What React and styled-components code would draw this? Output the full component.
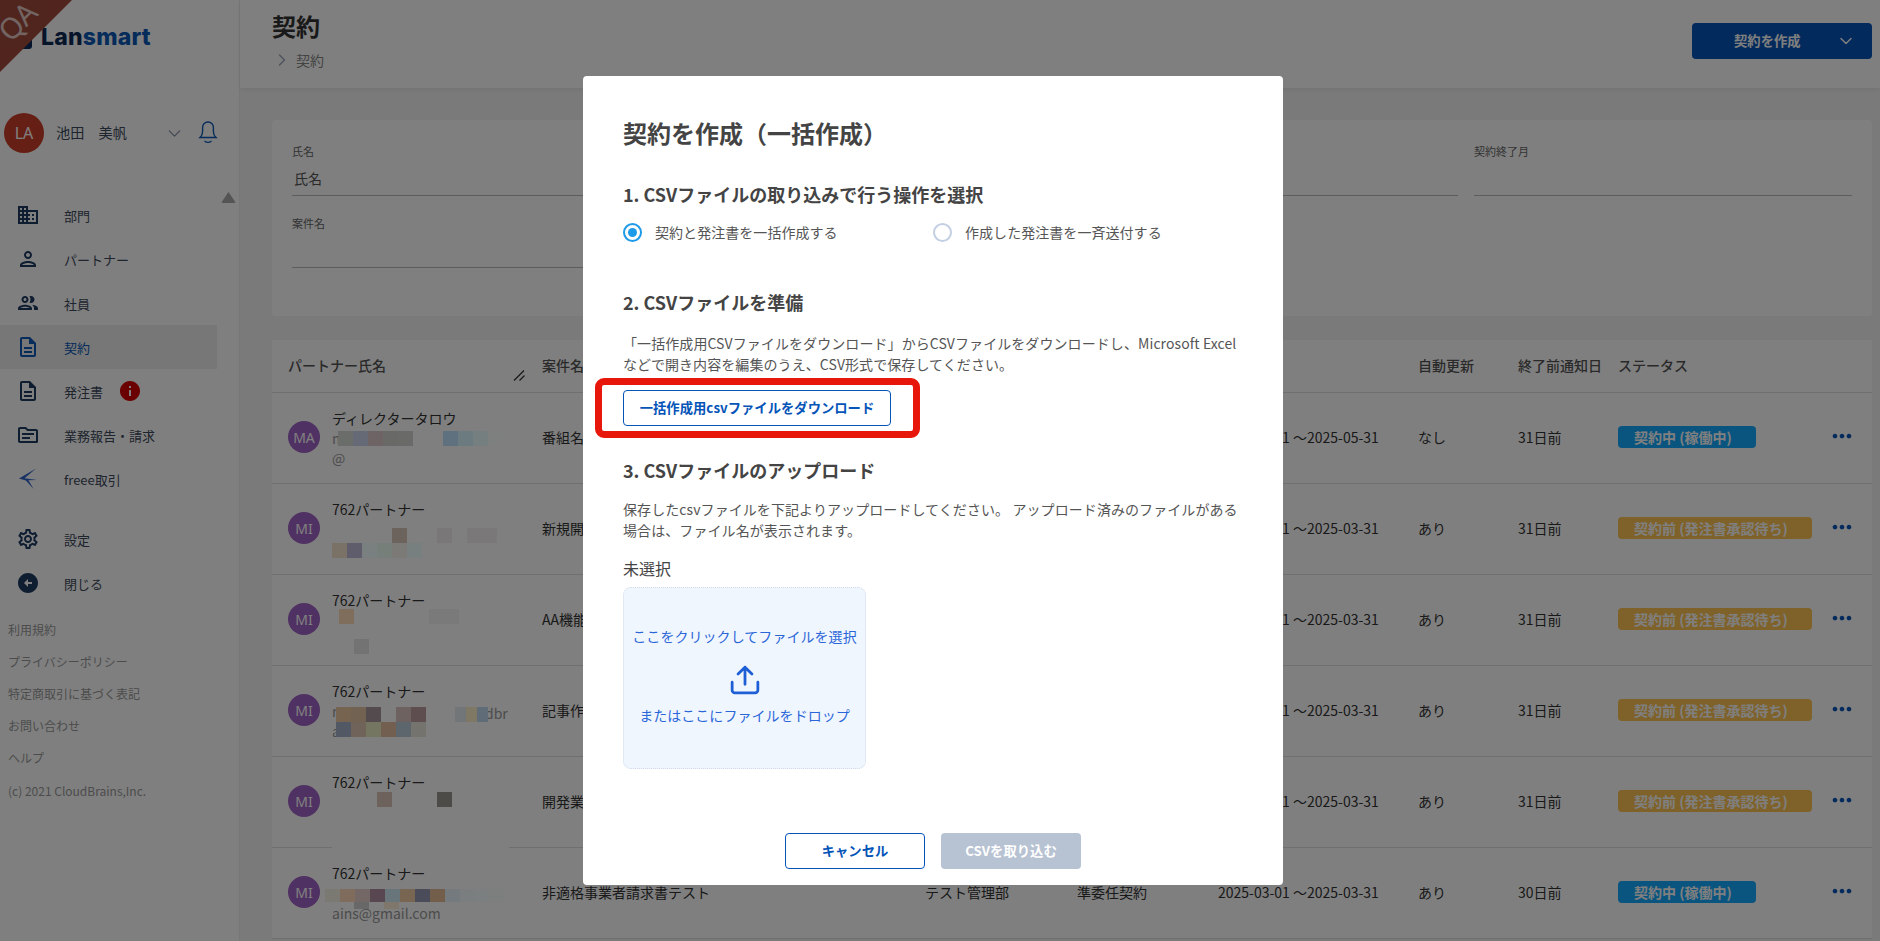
import React from 'react'
import styled, { createGlobalStyle } from 'styled-components'
import {
  MdBusiness,
  MdOutlinePerson,
  MdOutlinePeople,
  MdOutlineDescription,
  MdOutlineTopic,
  MdOutlineSettings,
  MdArrowCircleLeft,
  MdInfo,
  MdMoreHoriz
} from 'react-icons/md'
import { ChevronDown, ChevronRight } from 'lucide-react'

const GlobalStyle = createGlobalStyle`
  html, body {
    margin: 0;
    padding: 0;
    height: 941px;
    overflow: hidden;
    background: #fff;
    font-family: "Noto Sans CJK JP", "Noto Sans", sans-serif;
    color: #333;
  }
  * { box-sizing: border-box; }
`

const Page = styled.div`
  display: flex;
  width: 1880px;
  height: 941px;
  position: relative;
  overflow: hidden;
`

const Ribbon = styled.div`
  position: absolute;
  left: 0;
  top: 0;
  width: 72px;
  height: 72px;
  background: #a24a3c;
  clip-path: polygon(0 0, 100% 0, 0 100%);
  z-index: 3;
  span {
    position: absolute;
    left: -3px;
    top: 3px;
    font-size: 29px;
    line-height: 36px;
    color: #fff;
    opacity: 0.7;
    transform: rotate(-45deg);
    font-family: "Noto Sans", sans-serif;
  }
`

const Sidebar = styled.aside`
  width: 240px;
  flex: none;
  background: #fff;
  border-right: 1px solid #eee;
`

const LogoRow = styled.div`
  height: 113px;
  display: flex;
  align-items: flex-start;
  gap: 9px;
  padding: 25px 0 0 8px;
`

const LogoMark = styled.div`
  width: 24px;
  height: 24px;
  border-radius: 3px;
  background: #0a2b5c;
`

const LogoText = styled.div`
  font-family: "Inter", sans-serif;
  font-size: 23px;
  font-weight: 800;
  line-height: 24px;
  letter-spacing: 0.2px;
  color: #0e2a57;
  b {
    font-weight: 800;
    color: #0a59b4;
  }
`

const UserRow = styled.div`
  height: 40px;
  display: flex;
  align-items: center;
  padding-left: 4px;
`

const UserAvatar = styled.div`
  width: 40px;
  height: 40px;
  border-radius: 50%;
  background: #cb3520;
  color: #fff;
  display: flex;
  align-items: center;
  justify-content: center;
  font-family: "Noto Sans", sans-serif;
  font-size: 16px;
  opacity: 0.95;
`

const UserName = styled.div`
  width: 108px;
  margin: -2px 0 0 12px;
  font-size: 14.2px;
  color: #3d4a5c;
`

const Bell = styled.svg`
  width: 20px;
  height: 25px;
  margin: -4px 0 0 13px;
  fill: none;
  stroke: #0a59b4;
  stroke-width: 1.4;
`

const NavWrap = styled.nav`
  margin-top: 40px;
  position: relative;
`

const ScrollArrow = styled.div`
  position: absolute;
  left: 221px;
  top: -1px;
  width: 15px;
  height: 11px;
  background: #a8a8a8;
  border-radius: 2px;
  clip-path: polygon(50% 0, 100% 100%, 0 100%);
`

const NavItem = styled.div`
  width: 217px;
  height: 44px;
  display: flex;
  align-items: center;
  font-size: 13px;
  color: ${p => (p.$active ? '#0a59b4' : '#3d4a5c')};
  background: ${p => (p.$active ? '#eeeeee' : 'transparent')};
  margin-top: ${p => p.$top || 0}px;
  svg.nav-icon {
    flex: none;
    margin-left: 16px;
    margin-right: 24px;
    color: ${p => (p.$active ? '#0a59b4' : '#1f3b63')};
  }
`

const InfoBadge = styled.span`
  display: flex;
  margin-left: 15px;
  color: #d40000;
`

const FooterLinks = styled.div`
  margin-top: 9px;
  padding-left: 8px;
`

const FooterLink = styled.div`
  height: 32px;
  line-height: 32px;
  font-size: 12px;
  color: #999;
`

const Copyright = styled(FooterLink)`
  margin-top: 1px;
  color: #999;
`

const Main = styled.main`
  flex: 1;
  min-width: 0;
  background: #f5f5f5;
`

const Header = styled.header`
  height: 88px;
  background: #fff;
  box-shadow: 0 2px 6px rgba(0, 0, 0, 0.06);
  padding: 8px 8px 0 32px;
  display: flex;
  justify-content: space-between;
  position: relative;
`

const PageTitle = styled.h1`
  margin: 0;
  font-size: 24px;
  font-weight: 700;
  line-height: 36px;
  color: #333;
`

const Crumb = styled.div`
  display: flex;
  align-items: center;
  margin-top: 6px;
  font-size: 14px;
  color: #888;
  svg {
    color: #9fabbb;
    margin-right: 4px;
  }
`

const CreateButton = styled.div`
  width: 180px;
  height: 36px;
  margin-top: 15px;
  border-radius: 4px;
  background: #0554b8;
  color: #fff;
  font-size: 13.333px;
  font-weight: 700;
  position: relative;
  display: flex;
  align-items: center;
  padding: 0 0 2px 42px;
  svg {
    position: absolute;
    right: 16px;
    top: 8px;
  }
`

const Content = styled.div`
  padding: 32px 8px 0 32px;
`

const FilterCard = styled.section`
  height: 196px;
  background: #fff;
  border-radius: 4px;
  padding: 24px 20px 0;
  display: grid;
  grid-template-columns: repeat(4, 378px);
  grid-auto-rows: 72px;
  column-gap: 16px;
`

const Field = styled.div`
  height: 52px;
  border-bottom: 1px solid #bbb;
  font-size: 14px;
  color: #555;
  padding-left: 2px;
  label {
    display: block;
    margin: -1px 0 0 -2px;
    height: 25px;
    line-height: 16px;
    font-size: 11px;
    color: #666;
  }
`

const TableCard = styled.section`
  margin-top: 24px;
  background: #fff;
`

const Row = styled.div`
  display: grid;
  grid-template-columns: 254px 383px 152px 141px 200px 100px 100px 215px 1fr;
  align-items: center;
  height: ${p => p.$height}px;
  padding: 0 0 2px 16px;
  border-bottom: 1px solid #dedede;
  font-size: 14px;
  color: #333;
`

const HeadCell = styled.div`
  font-size: 14px;
  font-weight: 500;
  color: #555;
  position: relative;
  svg {
    position: absolute;
    left: 225px;
    top: 14px;
  }
`

const PartnerCell = styled.div`
  display: flex;
  align-items: center;
  position: relative;
  height: 88px;
`

const Avatar = styled.div`
  width: 32px;
  height: 32px;
  flex: none;
  border-radius: 50%;
  background: #9c5ac4;
  color: #fff;
  opacity: 0.95;
  display: flex;
  align-items: center;
  justify-content: center;
  font-family: "Noto Sans", sans-serif;
  font-size: 14px;
`

const PartnerText = styled.div`
  align-self: flex-start;
  margin-left: 12px;
  padding-top: 15px;
`

const PartnerName = styled.div`
  line-height: 20px;
  color: #333;
`

const Mail = styled.div`
  line-height: 20px;
  min-height: 20px;
  color: #999;
  font-size: 14px;
`

const MailTail = styled.div`
  position: absolute;
  left: 197px;
  top: 37px;
  line-height: 20px;
  color: #999;
  font-size: 14px;
`

const Mosaic = styled.div`
  position: absolute;
  display: flex;
`

const Pixel = styled.i`
  display: block;
  width: ${p => p.$w || 15}px;
  height: ${p => p.$h || 15}px;
  background: ${p => p.$c};
`

const Badge = styled.span`
  display: inline-block;
  height: 22px;
  line-height: 22px;
  padding: 0 24px 0 16px;
  border-radius: 4px;
  font-size: 14px;
  font-weight: 700;
  color: #fff;
  white-space: nowrap;
  background: ${p => (p.$tone === 'blue' ? '#15aaff' : '#ffc454')};
`

const Dots = styled.div`
  display: flex;
  color: #0554b8;
  transform: translate(-5px, -1px);
`

const Backdrop = styled.div`
  position: absolute;
  inset: 0;
  background: rgba(0, 0, 0, 0.5);
  z-index: 5;
`

const Modal = styled.div`
  position: absolute;
  left: 583px;
  top: 76px;
  width: 700px;
  height: 809px;
  background: #fff;
  border-radius: 4px;
  padding: 40px 40px 16px;
  display: flex;
  flex-direction: column;
  z-index: 6;
  color: #333;
`

const ModalTitle = styled.h2`
  margin: 0;
  font-size: 24px;
  line-height: 34px;
  font-weight: 700;
  color: #444;
`

const SectionTitle = styled.h3`
  margin: ${p => p.$top}px 0 0;
  font-size: 18px;
  line-height: 26px;
  font-weight: 700;
  color: #444;
`

const RadioRow = styled.div`
  display: flex;
  margin-top: 14px;
  height: 22px;
`

const RadioOption = styled.label`
  width: 310px;
  display: flex;
  align-items: center;
  gap: 13px;
  font-size: 14px;
  letter-spacing: 0.05px;
  color: #555;
`

const RadioDot = styled.span`
  width: 19px;
  height: 19px;
  border-radius: 50%;
  border: 2px solid ${p => (p.$on ? '#1e9be8' : '#c3d0e3')};
  display: flex;
  align-items: center;
  justify-content: center;
  &::after {
    content: '';
    width: 9px;
    height: 9px;
    border-radius: 50%;
    background: ${p => (p.$on ? '#1e9be8' : 'transparent')};
  }
`

const Paragraph = styled.p`
  margin: ${p => p.$top}px 0 0;
  font-size: 14px;
  line-height: 21px;
  letter-spacing: 0.08px;
  color: #555;
`

const OutlineButton = styled.button`
  width: ${p => p.$width}px;
  height: 36px;
  padding: 0 0 2px;
  border: 1px solid #0554b8;
  border-radius: 4px;
  background: #fff;
  color: #0554b8;
  font-family: inherit;
  font-size: 13.333px;
  font-weight: 700;
`

const DownloadWrap = styled.div`
  margin-top: 15px;
  position: relative;
  height: 36px;
`

const RedFrame = styled.div`
  position: absolute;
  left: -28px;
  top: -12px;
  width: 325px;
  height: 60px;
  border: 7px solid #e8170c;
  border-radius: 9px;
  pointer-events: none;
`

const FileState = styled.div`
  margin-top: 15px;
  font-size: 16px;
  line-height: 24px;
  color: #444;
`

const DropZone = styled.div`
  margin-top: 7px;
  width: 243px;
  height: 182px;
  background: #f0f6fe;
  border: 1px dotted #cfd9e6;
  border-radius: 8px;
  display: flex;
  flex-direction: column;
  align-items: center;
  justify-content: center;
  font-size: 14px;
  letter-spacing: 0.05px;
  color: #2b66d9;
  line-height: 21px;
  padding-bottom: 4px;
`

const UploadIcon = styled.svg`
  width: 30px;
  height: 30px;
  margin: 18px 0 10px;
  fill: none;
  stroke: #1f5fd6;
  stroke-width: 2.6;
  stroke-linecap: round;
  stroke-linejoin: round;
`

const ModalFooter = styled.div`
  margin-top: auto;
  display: flex;
  justify-content: center;
  gap: 16px;
`

const DisabledButton = styled.button`
  width: 140px;
  height: 36px;
  padding: 0 0 2px;
  border: 0;
  border-radius: 4px;
  background: #b7c2d2;
  color: #fff;
  font-family: inherit;
  font-size: 13.333px;
  font-weight: 700;
`

const FreeeIcon = () => (
  <svg className='nav-icon' width='24' height='24' viewBox='0 0 24 24'>
    <path fill='#2f62c8' d='M3 11.5 20 1.5 8.5 11.3 21 13l-8.6.3 5.2 8.7-7.7-8.6z' />
  </svg>
)

const rows = [
  {
    name: 'ディレクタータロウ',
    initials: 'MA',
    mail: ['m', '@'],
    work: '番組名',
    dates: '2025-03-01 ～2025-05-31',
    renew: 'なし',
    notice: '31日前',
    status: '契約中 (稼働中)',
    tone: 'blue',
    mosaic: [
      { x: 50, y: 38, c: ['#d6dad6', '#ccd4ec', '#ddc8ca', '#d2d4d0', '#d4d4d0'] },
      { x: 155, y: 38, c: ['#bee0ff', '#d6f6ff', '#eaffff', '#fcffff', '#ffffff'] }
    ]
  },
  {
    name: '762パートナー',
    initials: 'MI',
    work: '新規開発',
    dates: '2025-03-01 ～2025-03-31',
    renew: 'あり',
    notice: '31日前',
    status: '契約前 (発注書承認待ち)',
    tone: 'orange',
    mosaic: [
      { x: 104, y: 44, c: ['#d8c6b8'] },
      { x: 149, y: 44, c: ['#f4eef0'] },
      { x: 179, y: 44, c: ['#f6f0f2', '#f6f0f2'] },
      { x: 44, y: 59, c: ['#f4e4ce', '#beb8d6', '#f4fefe', '#ecfff4', '#f8f4ec', '#eeffff'] }
    ]
  },
  {
    name: '762パートナー',
    initials: 'MI',
    work: 'AA機能',
    dates: '2025-03-01 ～2025-03-31',
    renew: 'あり',
    notice: '31日前',
    status: '契約前 (発注書承認待ち)',
    tone: 'orange',
    mosaic: [
      { x: 51, y: 34, c: ['#ffdcb8'] },
      { x: 141, y: 34, c: ['#f4f4f4', '#f4f4f4'] },
      { x: 66, y: 64, c: ['#e6e6e8'] }
    ]
  },
  {
    name: '762パートナー',
    initials: 'MI',
    mail: ['m', 'a'],
    tail: 'dbr',
    work: '記事作成',
    dates: '2025-03-01 ～2025-03-31',
    renew: 'あり',
    notice: '31日前',
    status: '契約前 (発注書承認待ち)',
    tone: 'orange',
    mosaic: [
      { x: 48, y: 41, c: ['#eec8a0', '#e4c4a4', '#a8969e', '#ffffff', '#dcc4c2', '#bc9ca0'] },
      { x: 167, y: 41, c: ['#e4ecf2', '#fff0c8', '#c0d8f0'], w: 11 },
      { x: 48, y: 56, c: ['#a4b2c8', '#e0c8b4', '#e8ecc4', '#e4bea0', '#b8ccd8', '#e8e6dc'] }
    ]
  },
  {
    name: '762パートナー',
    initials: 'MI',
    work: '開発業務',
    dates: '2025-03-01 ～2025-03-31',
    renew: 'あり',
    notice: '31日前',
    status: '契約前 (発注書承認待ち)',
    tone: 'orange',
    mosaic: [
      { x: 89, y: 35, c: ['#dcc4b8'] },
      { x: 149, y: 35, c: ['#9a9690'] }
    ]
  },
  {
    name: '762パートナー',
    initials: 'MI',
    mail: ['', 'ains@gmail.com'],
    work: '非適格事業者請求書テスト',
    dept: 'テスト管理部',
    kind: '準委任契約',
    dates: '2025-03-01 ～2025-03-31',
    renew: 'あり',
    notice: '30日前',
    status: '契約中 (稼働中)',
    tone: 'blue',
    mosaic: [
      { x: 44, y: -2, c: ['#ffffff'], w: 177, h: 3 },
      { x: 37, y: 41, h: 13, c: ['#f4f4e4', '#ffd8b8', '#e6d0cc', '#b08ea0', '#d0ecf8', '#f0cca4', '#9498b4', '#e6bc96', '#eaf4ff', '#f4fcff', '#f6ffff', '#fafcfc'] },
      { x: 66, y: 54, h: 7, c: ['#d0d0d0'] },
      { x: 96, y: 54, h: 7, c: ['#ffeed8'] }
    ]
  }
]

const App = () => {
  return (
    <Page>
      <GlobalStyle />
      <Ribbon><span>QA</span></Ribbon>
      <Sidebar>
        <LogoRow>
          <LogoMark />
          <LogoText>Lan<b>smart</b></LogoText>
        </LogoRow>
        <UserRow>
          <UserAvatar>LA</UserAvatar>
          <UserName>池田　美帆</UserName>
          <ChevronDown size={21} color='#8894a6' strokeWidth={1.5} />
          <Bell viewBox='0 0 20 25'>
            <path d='M2 18.5c1.8-1.6 2.6-3.2 2.6-6V8.4a5.4 5.4 0 0 1 10.8 0v4.1c0 2.8.8 4.4 2.6 6z' />
            <path d='M6.5 22c2 1.6 5 1.6 7 0' />
          </Bell>
        </UserRow>
        <NavWrap>
          <ScrollArrow />
          <NavItem><MdBusiness className='nav-icon' size={24} />部門</NavItem>
          <NavItem><MdOutlinePerson className='nav-icon' size={24} />パートナー</NavItem>
          <NavItem><MdOutlinePeople className='nav-icon' size={24} />社員</NavItem>
          <NavItem $active><MdOutlineDescription className='nav-icon' size={24} />契約</NavItem>
          <NavItem>
            <MdOutlineDescription className='nav-icon' size={24} />発注書
            <InfoBadge><MdInfo size={24} /></InfoBadge>
          </NavItem>
          <NavItem><MdOutlineTopic className='nav-icon' size={24} />業務報告・請求</NavItem>
          <NavItem><FreeeIcon />freee取引</NavItem>
          <NavItem $top={16}><MdOutlineSettings className='nav-icon' size={24} />設定</NavItem>
          <NavItem><MdArrowCircleLeft className='nav-icon' size={24} />閉じる</NavItem>
        </NavWrap>
        <FooterLinks>
          <FooterLink>利用規約</FooterLink>
          <FooterLink>プライバシーポリシー</FooterLink>
          <FooterLink>特定商取引に基づく表記</FooterLink>
          <FooterLink>お問い合わせ</FooterLink>
          <FooterLink>ヘルプ</FooterLink>
          <Copyright>(c) 2021 CloudBrains,Inc.</Copyright>
        </FooterLinks>
      </Sidebar>

      <Main>
        <Header>
          <div>
            <PageTitle>契約</PageTitle>
            <Crumb><ChevronRight size={20} strokeWidth={1.8} />契約</Crumb>
          </div>
          <CreateButton>
            契約を作成
            <ChevronDown size={20} strokeWidth={1.8} />
          </CreateButton>
        </Header>
        <Content>
          <FilterCard>
            <Field><label>氏名</label>氏名</Field>
            <Field />
            <Field />
            <Field><label>契約終了月</label></Field>
            <Field><label>案件名</label></Field>
          </FilterCard>
          <TableCard>
            <Row $height={53}>
              <HeadCell>
                パートナー氏名
                <svg width='13' height='13' viewBox='0 0 13 13' fill='none' stroke='#333' strokeWidth='1.3'>
                  <path d='M1 11.5 11 1.5M6.5 11.5l5-5' />
                </svg>
              </HeadCell>
              <HeadCell>案件名</HeadCell>
              <HeadCell />
              <HeadCell />
              <HeadCell />
              <HeadCell>自動更新</HeadCell>
              <HeadCell>終了前通知日</HeadCell>
              <HeadCell>ステータス</HeadCell>
              <HeadCell />
            </Row>
            {rows.map((row, i) => (
              <Row $height={91} key={i}>
                <PartnerCell>
                  <Avatar>{row.initials}</Avatar>
                  <PartnerText>
                    <PartnerName>{row.name}</PartnerName>
                    {row.mail && <Mail>{row.mail[0]}</Mail>}
                    {row.mail && <Mail>{row.mail[1]}</Mail>}
                  </PartnerText>
                  {row.tail && <MailTail>{row.tail}</MailTail>}
                  {row.mosaic.map((m, j) => (
                    <Mosaic key={j} style={{ left: m.x, top: m.y }}>
                      {m.c.map((c, k) => <Pixel key={k} $c={c} $w={m.w} $h={m.h} />)}
                    </Mosaic>
                  ))}
                </PartnerCell>
                <div>{row.work}</div>
                <div>{row.dept}</div>
                <div>{row.kind}</div>
                <div>{row.dates}</div>
                <div>{row.renew}</div>
                <div>{row.notice}</div>
                <div><Badge $tone={row.tone}>{row.status}</Badge></div>
                <Dots><MdMoreHoriz size={28} /></Dots>
              </Row>
            ))}
          </TableCard>
        </Content>
      </Main>

      <Backdrop />
      <Modal>
        <ModalTitle>契約を作成（一括作成）</ModalTitle>
        <SectionTitle $top={31}>1. CSVファイルの取り込みで行う操作を選択</SectionTitle>
        <RadioRow>
          <RadioOption><RadioDot $on />契約と発注書を一括作成する</RadioOption>
          <RadioOption><RadioDot />作成した発注書を一斉送付する</RadioOption>
        </RadioRow>
        <SectionTitle $top={46}>2. CSVファイルを準備</SectionTitle>
        <Paragraph $top={18}>
          「一括作成用CSVファイルをダウンロード」からCSVファイルをダウンロードし、Microsoft Excelなどで開き内容を編集のうえ、CSV形式で保存してください。
        </Paragraph>
        <DownloadWrap>
          <OutlineButton $width={268}>一括作成用csvファイルをダウンロード</OutlineButton>
          <RedFrame />
        </DownloadWrap>
        <SectionTitle $top={31}>3. CSVファイルのアップロード</SectionTitle>
        <Paragraph $top={16}>
          保存したcsvファイルを下記よりアップロードしてください。 アップロード済みのファイルがある場合は、ファイル名が表示されます。
        </Paragraph>
        <FileState>未選択</FileState>
        <DropZone>
          <div>ここをクリックしてファイルを選択</div>
          <UploadIcon viewBox='0 0 28 28'>
            <path d='M14 18V2M7.5 8.5 14 2l6.5 6.5M2 16v7.5a2.5 2.5 0 0 0 2.5 2.5h19a2.5 2.5 0 0 0 2.5-2.5V16' />
          </UploadIcon>
          <div>またはここにファイルをドロップ</div>
        </DropZone>
        <ModalFooter>
          <OutlineButton $width={140}>キャンセル</OutlineButton>
          <DisabledButton>CSVを取り込む</DisabledButton>
        </ModalFooter>
      </Modal>
    </Page>
  )
}

export default App
